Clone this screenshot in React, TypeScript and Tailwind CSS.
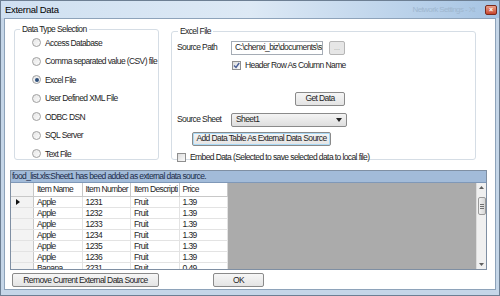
const rows = [
  ['Apple', '1231', 'Fruit', '1.39'],
  ['Apple', '1232', 'Fruit', '1.39'],
  ['Apple', '1233', 'Fruit', '1.39'],
  ['Apple', '1234', 'Fruit', '1.39'],
  ['Apple', '1235', 'Fruit', '1.39'],
  ['Apple', '1236', 'Fruit', '1.39'],
  ['Banana', '2231', 'Fruit', '0.49'],
];

const sources = [
  'Access Database',
  'Comma separated value (CSV) file',
  'Excel File',
  'User Defined XML File',
  'ODBC DSN',
  'SQL Server',
  'Text File',
];

function Radio({ label, checked }: { label: string; checked?: boolean }) {
  return (
    <div className="flex items-center h-[18.5px]">
      <span className="w-[9px] h-[9px] rounded-full border border-[#a0a0a0] bg-gradient-to-br from-[#e6e6e6] to-[#fbfbfb] flex items-center justify-center mr-[4px]">
        {checked && <span className="w-[4px] h-[4px] rounded-full bg-[#2d4f7a]" />}
      </span>
      <span>{label}</span>
    </div>
  );
}

function CheckBox({ checked }: { checked?: boolean }) {
  return (
    <span className="w-[9px] h-[9px] border border-[#8f8f8f] bg-gradient-to-br from-[#dcdcdc] to-[#fafafa] flex items-center justify-center shrink-0">
      {checked && (
        <svg width="7" height="7" viewBox="0 0 7 7">
          <path d="M1 3.5 L3 5.5 L6.2 1" stroke="#4a5f97" strokeWidth="1.4" fill="none" />
        </svg>
      )}
    </span>
  );
}

function Button({ children, className = '' }: { children: React.ReactNode; className?: string }) {
  return (
    <div
      className={
        'h-[14px] flex items-center justify-center rounded-[2px] border border-[#8a8a8a] bg-gradient-to-b from-[#f6f6f6] to-[#e4e4e4] ' +
        className
      }
    >
      {children}
    </div>
  );
}

export default function App() {
  return (
    <div className="w-[500px] h-[296px] overflow-hidden flex flex-col bg-[#c5d6e8] border border-[#6d7f93] font-['Liberation_Sans',Arial,sans-serif] text-[8.5px] tracking-[-0.6px] whitespace-nowrap text-[#1e1e1e] leading-none">
      {/* title bar */}
      <div className="h-[17px] flex items-center pl-[4px] pr-[2px] bg-gradient-to-r from-[#cfe0f1] via-[#dde9f5] to-[#a6c4e3]">
        <span className="text-[9.5px] tracking-[-0.3px] text-black">External Data</span>
        <span className="ml-auto mr-[10px] text-[8px] text-[#9fb7cf]">Network Settings - Xt</span>
        <div className="w-[12px] h-[10px] rounded-[2px] border border-[#7a2a1c] bg-gradient-to-b from-[#e8a08c] to-[#c7432a] flex items-center justify-center text-white text-[7px] font-bold tracking-normal">
          ×
        </div>
      </div>

      {/* client area */}
      <div className="flex-1 mx-[3px] mb-[5px] bg-white border border-[#8ea3ba] flex flex-col">
        {/* top groups */}
        <div className="flex pt-[6px] pl-[9px] h-[146px]">
          <fieldset className="w-[145px] h-[135px] border border-[#d5dde5] rounded-[3px] pl-[17px]">
            <legend className="px-[2px] ml-[-12px]">Data Type Selection</legend>
            {sources.map((s) => (
              <Radio key={s} label={s} checked={s === 'Excel File'} />
            ))}
          </fieldset>

          <fieldset className="ml-[12px] mt-[2px] w-[305px] h-[133px] border border-[#d5dde5] rounded-[3px] pl-[5px]">
            <legend className="px-[2px] ml-[1px]">Excel File</legend>
            <div className="flex items-center mt-[5px]">
              <span className="w-[54px]">Source Path</span>
              <div className="w-[92px] h-[14px] border border-[#a5acb5] flex items-center pl-[3px] overflow-hidden">
                C:\chenxi_biz\documents\su
              </div>
              <div className="ml-[6px] w-[16px] h-[14px] rounded-[2px] border border-[#b5b5b5] bg-[#e6e6e6] flex items-center justify-center text-[#9a9a9a] text-[7px] tracking-normal">
                ...
              </div>
            </div>
            <div className="flex items-center ml-[55px] mt-[6px] gap-[4px]">
              <CheckBox checked />
              <span>Header Row As Column Name</span>
            </div>
            <div className="flex mt-[22px] ml-[118px]">
              <Button className="w-[50px]">Get Data</Button>
            </div>
            <div className="flex items-center mt-[7px]">
              <span className="w-[54px]">Source Sheet</span>
              <div className="w-[116px] h-[14px] border border-[#8a8a8a] rounded-[2px] bg-gradient-to-b from-[#f4f4f4] to-[#dedede] flex items-center pl-[4px]">
                <span>Sheet1</span>
                <svg className="ml-auto mr-[4px]" width="6" height="4" viewBox="0 0 6 4">
                  <path d="M0 0 H6 L3 4 Z" fill="#222" />
                </svg>
              </div>
            </div>
            <div className="flex mt-[5px] ml-[15px]">
              <Button className="w-[139px] border-[#3c80b4] shadow-[inset_0_0_0_1px_#a9d9f6]">
                Add Data Table As External Data Source
              </Button>
            </div>
            <div className="flex items-center mt-[7px] gap-[4px]">
              <CheckBox />
              <span>Embed Data (Selected to save selected data to local file)</span>
            </div>
          </fieldset>
        </div>

        {/* grid */}
        <div className="ml-[5px] mt-[5px] w-[477px] h-[100px] border border-[#7f8fa3] flex flex-col overflow-hidden">
          <div className="h-[12px] shrink-0 bg-[#a2bbd9] border-b border-[#7f98b8] flex items-center pl-[1px] text-[#1c2c4a]">
            food_list.xls:Sheet1 has beed added as external data source.
          </div>
          <div className="flex flex-1 min-h-0">
            <div className="w-[217px] bg-white flex flex-col">
              <div className="flex h-[14px] shrink-0 border-b border-[#c8c8c8]">
                <div className="w-[23px] border-r border-[#c8c8c8] bg-[#f3f3f3]" />
                {['Item Name', 'Item Number', 'Item Descripti', 'Price'].map((h) => (
                  <div key={h} className="w-[48px] flex-1 border-r border-[#c8c8c8] flex items-center pl-[3px] overflow-hidden">
                    {h}
                  </div>
                ))}
              </div>
              {rows.map((r, i) => (
                <div key={i} className="flex h-[11px] shrink-0 border-b border-[#e3e3e3]">
                  <div className="w-[23px] border-r border-[#c8c8c8] bg-[#f3f3f3] flex items-center pl-[5px]">
                    {i === 0 && (
                      <svg width="4" height="6" viewBox="0 0 4 6">
                        <path d="M0 0 L4 3 L0 6 Z" fill="#111" />
                      </svg>
                    )}
                  </div>
                  {r.map((c, j) => (
                    <div key={j} className="flex-1 w-[48px] border-r border-[#e3e3e3] flex items-center pl-[3px]">
                      {c}
                    </div>
                  ))}
                </div>
              ))}
            </div>
            <div className="flex-1 bg-[#ababab]" />
            <div className="w-[10px] bg-[#f0f0f0] border-l border-[#dcdcdc] flex flex-col items-center">
              <svg className="mt-[3px]" width="5" height="3" viewBox="0 0 5 3">
                <path d="M0 3 L2.5 0 L5 3 Z" fill="#606060" />
              </svg>
              <div className="mt-[8px] w-[8px] h-[18px] rounded-[2px] border border-[#9a9a9a] bg-gradient-to-r from-[#f2f2f2] to-[#d8d8d8] flex flex-col items-center justify-center gap-[1px]">
                <span className="w-[4px] h-px bg-[#707070]" />
                <span className="w-[4px] h-px bg-[#707070]" />
                <span className="w-[4px] h-px bg-[#707070]" />
              </div>
              <svg className="mt-auto mb-[3px]" width="5" height="3" viewBox="0 0 5 3">
                <path d="M0 0 L5 0 L2.5 3 Z" fill="#606060" />
              </svg>
            </div>
          </div>
        </div>

        {/* bottom buttons */}
        <div className="flex mt-[3px] ml-[7px]">
          <Button className="w-[147px]">Remove Current External Data Source</Button>
          <Button className="ml-[54px] w-[51px]">OK</Button>
        </div>
      </div>
    </div>
  );
}
